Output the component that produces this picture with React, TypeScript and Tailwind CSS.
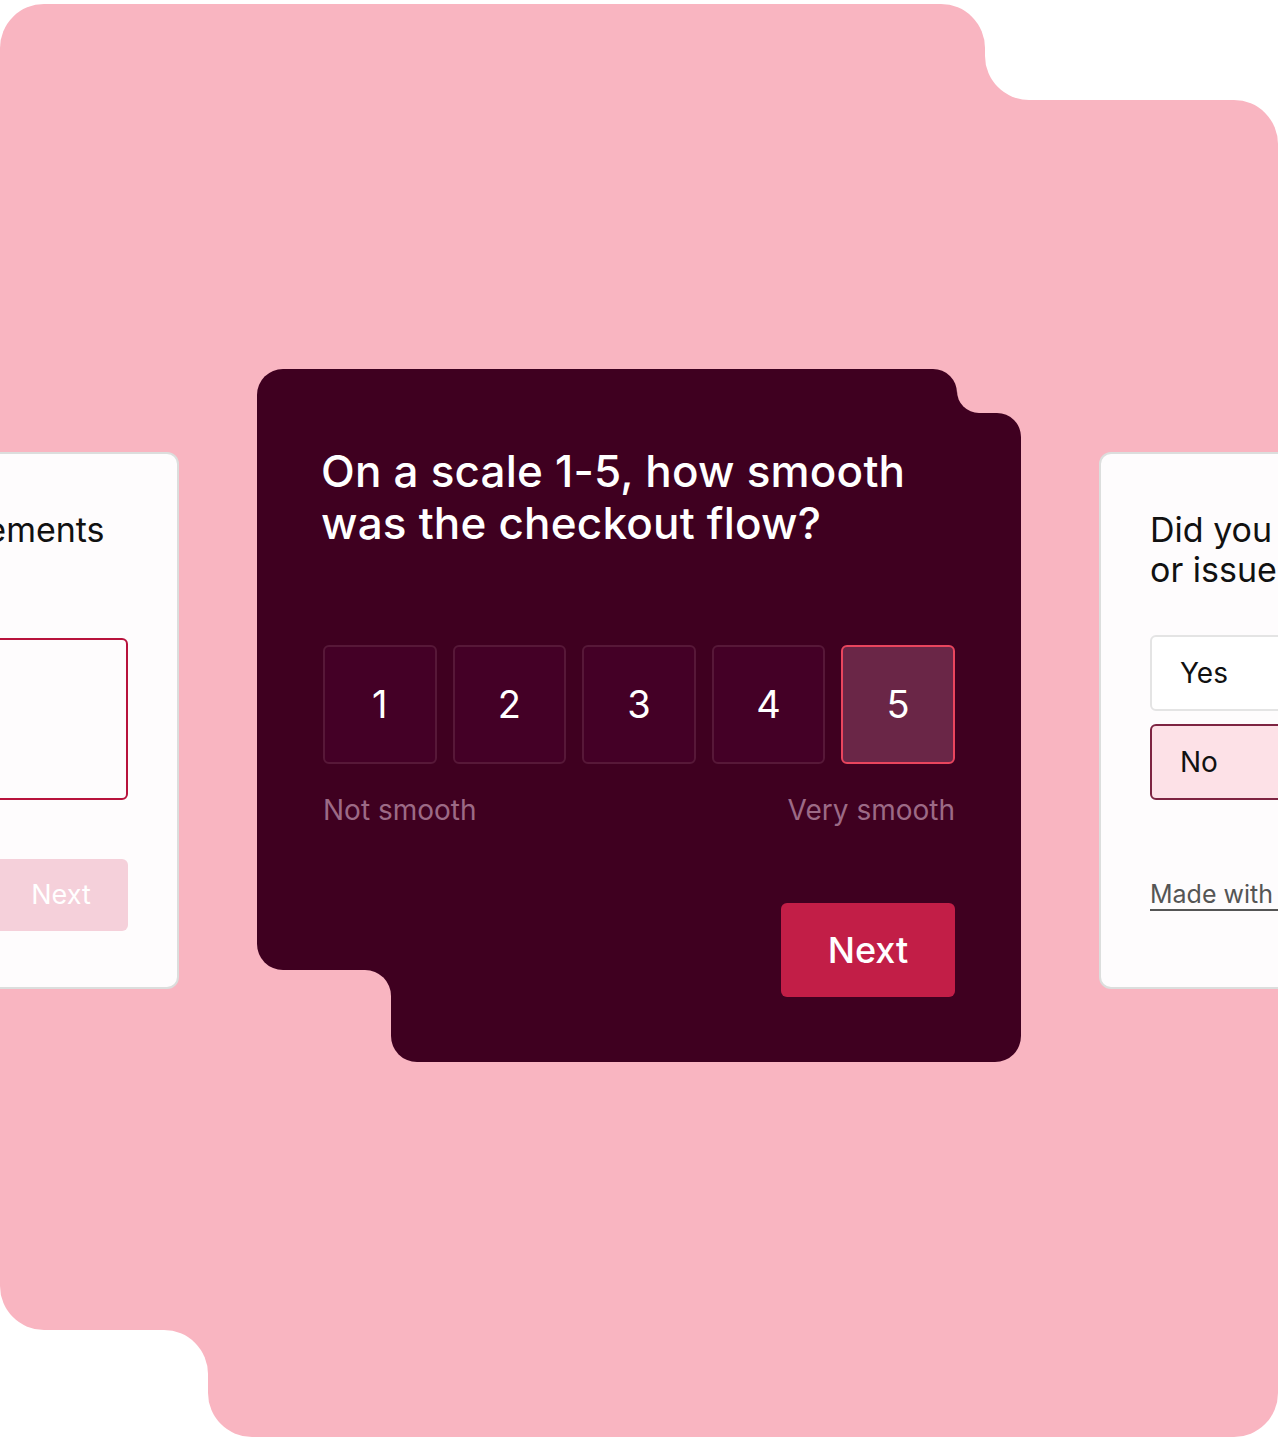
const SCALE = [1, 2, 3, 4, 5]

function SideCardLeft() {
  return (
    <div className="mt-[11px] flex h-[537px] w-[495px] shrink-0 flex-col rounded-[12px] border-2 border-[#dcdedd] bg-[#fefcfd] px-[49px] pt-[56px]">
      <h3 className="whitespace-nowrap text-[34px] leading-[40px] text-[#111111]">Suggest improvements</h3>
      <div className="mt-[88px] h-[162px] w-full rounded-[6px] border-2 border-[#b8123c]" />
      <button className="mt-[59px] h-[72px] w-[134px] self-end rounded-[6px] bg-[#f5d0da] text-[27px] text-white">
        Next
      </button>
    </div>
  )
}

function SideCardRight() {
  return (
    <div className="mt-[11px] flex h-[537px] w-[495px] shrink-0 flex-col rounded-[12px] border-2 border-[#dcdedd] bg-[#fefcfd] px-[49px] pt-[56px]">
      <h3 className="whitespace-nowrap text-[34px] leading-[40px] text-[#111111]">
        Did you run into any bugs
        <br />
        or issues at checkout?
      </h3>
      <div className="mt-[45px] flex flex-col gap-[13px]">
        <div className="flex h-[76px] items-center rounded-[6px] border-2 border-[#e4e4e4] bg-white pl-[28px] text-[28px] text-[#111111]">
          Yes
        </div>
        <div className="flex h-[76px] items-center rounded-[6px] border-2 border-[#7d2442] bg-[#fde1e7] pl-[28px] text-[28px] text-[#111111]">
          No
        </div>
      </div>
      <a className="mt-[79px] whitespace-nowrap text-[25px] leading-[30px] text-[#555555] underline underline-offset-[6px]">
        Made with Formbricks
      </a>
    </div>
  )
}

function SurveyCard() {
  return (
    // notched card: background pieces sit in grid cells, content spans the whole grid on top
    <div className="grid shrink-0 grid-cols-[134px_566px_64px] grid-rows-[44px_557px_92px]">
      <div className="col-span-2 col-start-1 row-start-1 rounded-tl-[26px] rounded-tr-[24px] bg-[#3f0020]" />
      <div className="col-start-3 row-start-1 bg-[#3f0020]">
        <div className="h-full rounded-bl-[22px] bg-[#f9b5c1]" />
      </div>
      <div className="col-span-3 col-start-1 row-start-2 rounded-tr-[24px] rounded-bl-[26px] bg-[#3f0020]" />
      <div className="col-start-1 row-start-3 bg-[#3f0020]">
        <div className="h-full rounded-tr-[26px] bg-[#f9b5c1]" />
      </div>
      <div className="col-span-2 col-start-2 row-start-3 rounded-b-[26px] bg-[#3f0020]" />

      <div className="col-span-3 col-start-1 row-span-3 row-start-1 flex flex-col px-[66px] pt-[76px]">
        <h2 className="-ml-[2px] text-[44px] leading-[52px] font-medium tracking-[0.2px] text-white">
          On a scale 1-5, how smooth
          <br />
          was the checkout flow?
        </h2>
        <div className="mt-[96px] flex gap-4">
          {SCALE.map(n =>
            n === 5 ? (
              <button
                key={n}
                className="h-[119px] flex-1 rounded-[6px] border-2 border-[#e9455e] bg-[#6a2647] text-[38px] text-white"
              >
                {n}
              </button>
            ) : (
              <button
                key={n}
                className="h-[119px] flex-1 rounded-[6px] border-2 border-[#571838] bg-[#440026] text-[38px] text-white"
              >
                {n}
              </button>
            ),
          )}
        </div>
        <div className="mt-[29px] flex justify-between text-[28px] leading-[34px] text-[#9c6a86]">
          <span>Not smooth</span>
          <span>Very smooth</span>
        </div>
        <button className="mt-[76px] h-[94px] w-[174px] self-end rounded-[6px] bg-[#c21e47] text-[36px] font-medium text-white">
          Next
        </button>
      </div>
    </div>
  )
}

export default function App() {
  return (
    <div className="h-[1438px] w-[1280px] overflow-hidden bg-white pt-1 [font-family:Inter,sans-serif]">
      <div className="flex w-[1278px] flex-col">
        {/* top band, with the inverted corner on the right */}
        <div className="flex h-[96px]">
          <div className="w-[985px] rounded-t-[44px] bg-[#f9b5c1]" />
          <div className="flex-1 bg-[#f9b5c1]">
            <div className="h-full rounded-bl-[44px] bg-white" />
          </div>
        </div>

        <main className="flex h-[1230px] items-center justify-center gap-[78px] overflow-hidden rounded-tr-[44px] rounded-bl-[44px] bg-[#f9b5c1]">
          <SideCardLeft />
          <SurveyCard />
          <SideCardRight />
        </main>

        {/* bottom band, inverted corner on the left */}
        <div className="flex h-[107px]">
          <div className="w-[208px] bg-[#f9b5c1]">
            <div className="h-full rounded-tr-[44px] bg-white" />
          </div>
          <div className="flex-1 rounded-b-[44px] bg-[#f9b5c1]" />
        </div>
      </div>
    </div>
  )
}
